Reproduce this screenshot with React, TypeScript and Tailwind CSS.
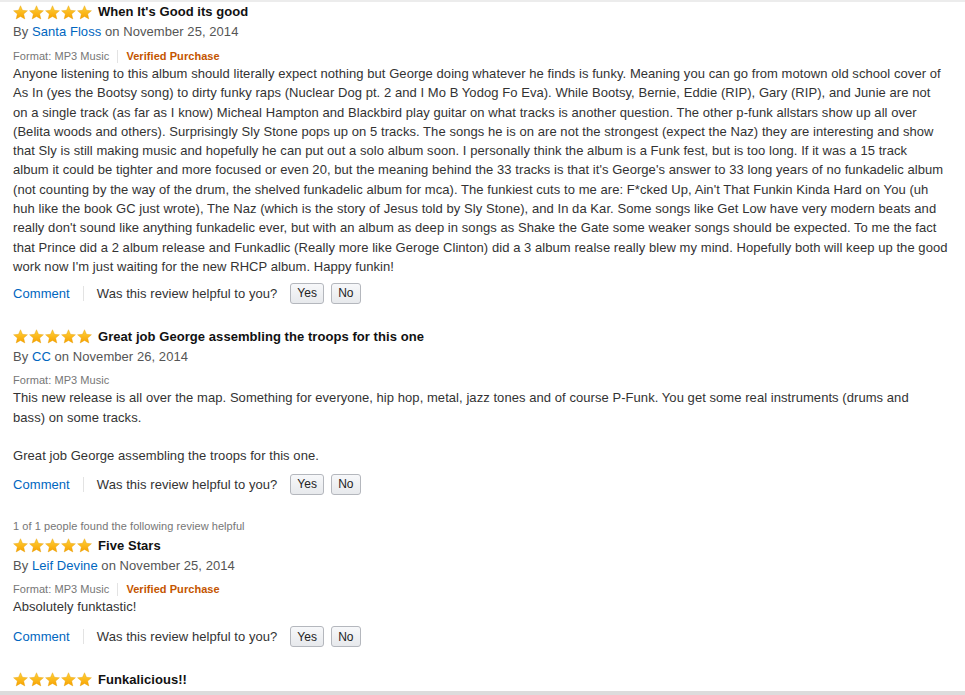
import React from "react";

type Review = {
    helpful?: string;
    title: string;
    author: string;
    date: string;
    verified: boolean;
    // each paragraph is a list of lines, broken where the page breaks them
    body: string[][];
    bodyGap: string;
};

const reviews: Review[] = [
    {
        title: "When It's Good its good",
        author: "Santa Floss",
        date: "November 25, 2014",
        verified: true,
        bodyGap: "mt-[5px]",
        body: [
            [
                "Anyone listening to this album should literally expect nothing but George doing whatever he finds is funky. Meaning you can go from motown old school cover of",
                "As In (yes the Bootsy song) to dirty funky raps (Nuclear Dog pt. 2 and I Mo B Yodog Fo Eva). While Bootsy, Bernie, Eddie (RIP), Gary (RIP), and Junie are not",
                "on a single track (as far as I know) Micheal Hampton and Blackbird play guitar on what tracks is another question. The other p-funk allstars show up all over",
                "(Belita woods and others). Surprisingly Sly Stone pops up on 5 tracks. The songs he is on are not the strongest (expect the Naz) they are interesting and show",
                "that Sly is still making music and hopefully he can put out a solo album soon. I personally think the album is a Funk fest, but is too long. If it was a 15 track",
                "album it could be tighter and more focused or even 20, but the meaning behind the 33 tracks is that it's George's answer to 33 long years of no funkadelic album",
                "(not counting by the way of the drum, the shelved funkadelic album for mca). The funkiest cuts to me are: F*cked Up, Ain't That Funkin Kinda Hard on You (uh",
                "huh like the book GC just wrote), The Naz (which is the story of Jesus told by Sly Stone), and In da Kar. Some songs like Get Low have very modern beats and",
                "really don't sound like anything funkadelic ever, but with an album as deep in songs as Shake the Gate some weaker songs should be expected. To me the fact",
                "that Prince did a 2 album release and Funkadlic (Really more like Geroge Clinton) did a 3 album realse really blew my mind. Hopefully both will keep up the good",
                "work now I'm just waiting for the new RHCP album. Happy funkin!",
            ],
        ],
    },
    {
        title: "Great job George assembling the troops for this one",
        author: "CC",
        date: "November 26, 2014",
        verified: false,
        bodyGap: "mt-[7px]",
        body: [
            [
                "This new release is all over the map. Something for everyone, hip hop, metal, jazz tones and of course P-Funk. You get some real instruments (drums and",
                "bass) on some tracks.",
            ],
            ["Great job George assembling the troops for this one."],
        ],
    },
    {
        helpful: "1 of 1 people found the following review helpful",
        title: "Five Stars",
        author: "Leif Devine",
        date: "November 25, 2014",
        verified: true,
        bodyGap: "mt-[8px]",
        body: [["Absolutely funktastic!"]],
    },
];

function Star({ id }: { id: string }) {
    return (
        <svg width="15" height="15" viewBox="0 0 24 24">
            <defs>
                <linearGradient id={id} x1="0" y1="0" x2="0" y2="1">
                    <stop offset="0" stopColor="#ffd23a" />
                    <stop offset="1" stopColor="#f7a100" />
                </linearGradient>
            </defs>
            <path
                d="M12 1.2l3.2 7.3 7.9.7-6 5.3 1.8 7.8L12 18.2l-6.9 4.1 1.8-7.8-6-5.3 7.9-.7z"
                fill={`url(#${id})`}
                stroke="#e39b00"
                strokeWidth="0.6"
            />
        </svg>
    );
}

function Stars({ name }: { name: string }) {
    return (
        <div className="flex gap-[1px] items-center">
            {[0, 1, 2, 3, 4].map((i) => (
                <Star key={i} id={`st-${name}-${i}`} />
            ))}
        </div>
    );
}

function TitleRow({ title, name }: { title: string; name: string }) {
    return (
        <div className="flex items-center gap-[6px] h-[20px]">
            <Stars name={name} />
            <span className="text-[13px] font-bold text-[#111]">{title}</span>
        </div>
    );
}

function HelpfulRow({ gap }: { gap: string }) {
    return (
        <div className={`flex items-center h-[24px] ${gap}`}>
            <a className="text-[13px] text-[#0066c0]">Comment</a>
            <span className="w-px h-[15px] bg-[#e3e3e3] mx-[13px]" />
            <span className="text-[13px] text-[#333]">Was this review helpful to you?</span>
            <div className="flex gap-[7px] ml-[13px]">
                <button className="h-[21px] px-[6px] border border-[#b4b7bd] rounded-[3px] bg-gradient-to-b from-[#f7f8fa] to-[#e7e9ec] text-[12px] text-[#222]">
                    Yes
                </button>
                <button className="h-[21px] px-[6px] border border-[#b4b7bd] rounded-[3px] bg-gradient-to-b from-[#f7f8fa] to-[#e7e9ec] text-[12px] text-[#222]">
                    No
                </button>
            </div>
        </div>
    );
}

export default function App() {
    return (
        <div
            className="w-[965px] h-[695px] bg-white flex flex-col overflow-hidden tracking-[0.06px]"
            style={{ fontFamily: '"Liberation Sans", Arial, sans-serif' }}
        >
            <div className="h-[2px] bg-[#ececec] shrink-0" />
            <div className="flex-1 overflow-hidden pl-[13px] pr-[20px]">
                {reviews.map((r, idx) => (
                    <div key={idx} className={idx > 0 ? "mt-[21px]" : ""}>
                        {r.helpful && (
                            <div className="h-[18px] flex items-center text-[11px] text-[#767676]">
                                {r.helpful}
                            </div>
                        )}
                        <TitleRow title={r.title} name={`r${idx}`} />
                        <div className="h-[20px] flex items-center text-[13px] text-[#555]">
                            By&nbsp;<a className="text-[#0066c0]">{r.author}</a>&nbsp;on {r.date}
                        </div>
                        <div className="mt-[6px] h-[16px] flex items-center text-[11px]">
                            <span className="text-[#767676]">Format: MP3 Music</span>
                            {r.verified && (
                                <>
                                    <span className="w-px h-[13px] bg-[#e3e3e3] mx-[8px]" />
                                    <span className="text-[#c45500] font-bold">Verified Purchase</span>
                                </>
                            )}
                        </div>
                        <div className="text-[13px] leading-[19.3px] text-[#333]">
                            {r.body.map((p, i) => (
                                <p key={i} className={i > 0 ? "mt-[19.3px]" : ""}>
                                    {p.map((line, j) => (
                                        <span key={j} className="block whitespace-nowrap">
                                            {line}
                                        </span>
                                    ))}
                                </p>
                            ))}
                        </div>
                        <HelpfulRow gap={r.bodyGap} />
                    </div>
                ))}
                <div className="mt-[21px]">
                    <TitleRow title="Funkalicious!!" name="r3" />
                </div>
            </div>
            <div className="h-[4px] bg-[#dcdcdc] shrink-0" />
        </div>
    );
}
